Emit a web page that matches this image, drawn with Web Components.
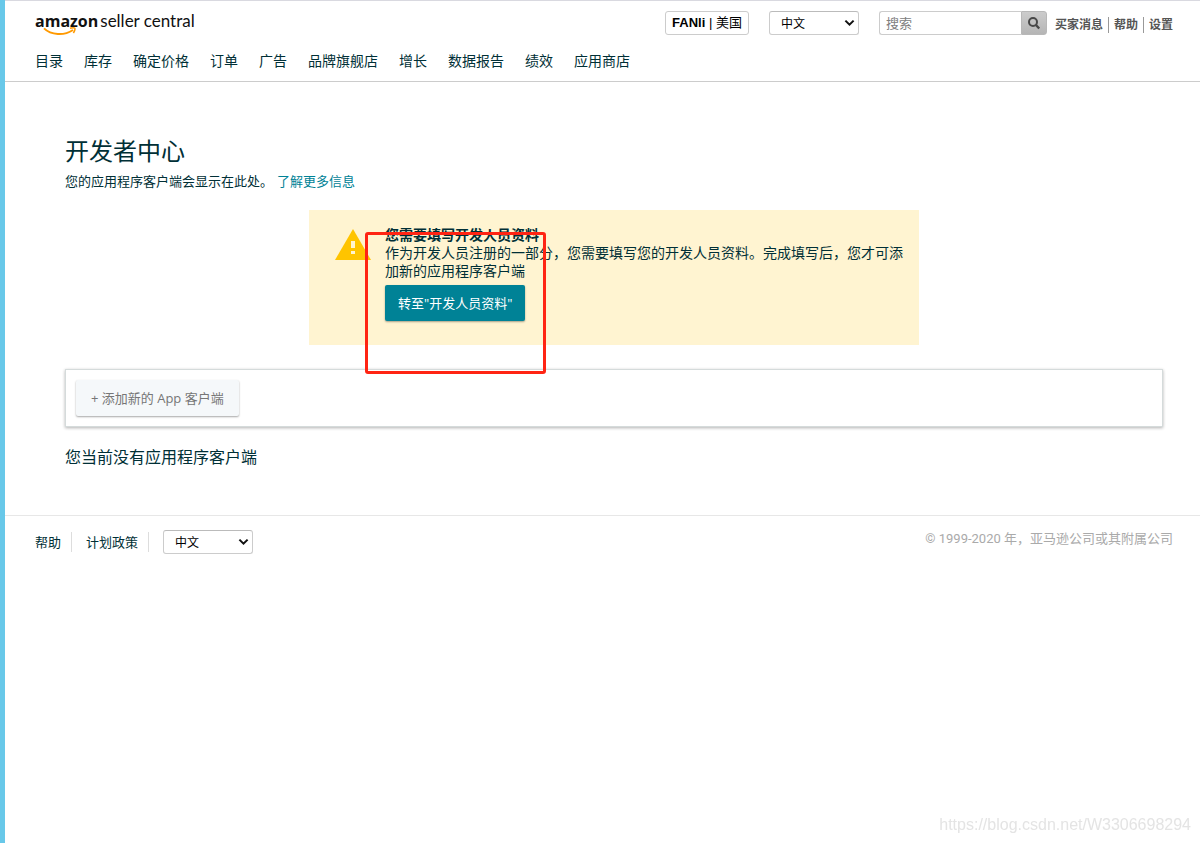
<!DOCTYPE html>
<html lang="zh-CN">
<head>
<meta charset="utf-8">
<meta name="viewport" content="width=device-width, initial-scale=1">
<title>开发者中心</title>
<style>
  html {
    --ink: #002f36;
    --teal: #008296;
    --line: #ccc;
  }

  body {
    margin: 0;
    min-height: 100vh;
    box-sizing: border-box;
    border-left: 5px solid #68c8e9;
    background: #fff;
    color: var(--ink);
    font-family: "Open Sans", "Noto Sans CJK SC", sans-serif;
    font-size: 13px;
    line-height: 20px;
  }
</style>
</head>
<body>

<seller-header></seller-header>

<developer-console>
  <profile-alert heading="您需要填写开发人员资料" action="转至&quot;开发人员资料&quot;">作为开发人员注册的一部分，您需要填写您的开发人员资料。完成填写后，您才可添加新的应用程序客户端</profile-alert>
</developer-console>

<seller-footer></seller-footer>

<page-watermark>https://blog.csdn.net/W3306698294</page-watermark>

<script>
// shared base: clones the template getter into an open shadow root
class ShadowElement extends HTMLElement {
  constructor() {
    super();
    let t = document.createElement("template");
    t.innerHTML = this.template;
    this.attachShadow({ mode: "open" });
    this.shadowRoot.appendChild(t.content.cloneNode(true));
  }
}

class LanguageSelect extends ShadowElement {
  get template() {
    return `
    <style>
      :host {
        display: inline-grid;
        width: 90px;
        align-items: center;
      }

      select, svg {
        grid-area: 1 / 1;
      }

      select {
        appearance: none;
        box-sizing: border-box;
        width: 100%;
        height: 24px;
        margin: 0;
        padding: 2px 20px 0 11px;
        border: 1px solid var(--line);
        border-top-color: #bbb;
        border-radius: 3px;
        background: #fff;
        color: #000;
        font: inherit;
        font-size: 12px;
      }

      svg {
        justify-self: end;
        margin-right: 4px;
        pointer-events: none;
      }
    </style>
    <select aria-label="语言">
      <option>中文</option>
      <option>English</option>
    </select>
    <svg width="11" height="8" viewBox="0 0 11 8" fill="none" stroke="#111" stroke-width="2" aria-hidden="true">
      <path d="M1.4 1.6 5.5 5.7 9.6 1.6"/>
    </svg>
    `;
  }
}

customElements.define("language-select", LanguageSelect);

class SellerLogo extends ShadowElement {
  get template() {
    return `
    <style>
      :host {
        display: block;
      }

      a {
        position: relative;
        display: flex;
        align-items: baseline;
        gap: 2px;
        color: #111;
        font-family: "Open Sans", sans-serif;
        font-size: 16px;
        line-height: 20px;
        text-decoration: none;
      }

      .light {
        font-family: Lato, sans-serif;
        font-size: 17px;
      }

      /* the smile sits over the descent of the word */
      svg {
        position: absolute;
        left: 8px;
        top: 16px;
      }
    </style>
    <a href="#"><b>amazon</b><span class="light">seller central</span>
      <svg width="34" height="10" viewBox="0 0 34 10" fill="none" stroke="#f90" aria-hidden="true">
        <path d="M1 1.4C8 8.2 21 9 30 3" stroke-width="2"/>
        <path d="M27 1.2c2.3-.5 4.3-.6 4.8 0s-.2 2.8-1.4 4.8" stroke-width="1.5"/>
      </svg>
    </a>
    `;
  }
}

customElements.define("seller-logo", SellerLogo);

class SearchBox extends ShadowElement {
  get template() {
    return `
    <style>
      :host {
        display: block;
      }

      form {
        display: flex;
        width: 168px;
        height: 24px;
      }

      input {
        flex: 1;
        min-width: 0;
        box-sizing: border-box;
        padding: 0 6px;
        border: 1px solid var(--line);
        border-right: 0;
        border-radius: 3px 0 0 3px;
        font: inherit;
      }

      input::placeholder {
        color: #808080;
      }

      button {
        display: grid;
        place-items: center;
        width: 26px;
        padding: 0;
        border: 1px solid #b8b8b8;
        border-radius: 0 3px 3px 0;
        background: linear-gradient(#ccc, #b5b5b5);
      }
    </style>
    <form>
      <input type="search" placeholder="搜索" aria-label="搜索">
      <button type="button" aria-label="提交搜索">
        <svg width="14" height="14" viewBox="0 0 14 14" fill="none" stroke="#484848" stroke-width="2">
          <circle cx="6" cy="6" r="4"/>
          <path d="m9 9 3.2 3.5" stroke-width="2.4"/>
        </svg>
      </button>
    </form>
    `;
  }
}

customElements.define("search-box", SearchBox);

class SellerHeader extends ShadowElement {
  get template() {
    return `
    <style>
      :host {
        display: block;
        padding: 10px 27px 10px 30px;
        border-top: 1px solid #d9d9e0;
        border-bottom: 1px solid var(--line);
      }

      .top, .tools, .links, nav {
        display: flex;
      }

      .top {
        justify-content: space-between;
      }

      .tools {
        gap: 20px;
      }

      .account {
        box-sizing: border-box;
        height: 24px;
        padding: 0 6px;
        border: 1px solid var(--line);
        border-radius: 3px;
        background: #fff;
        color: #000;
        font-family: "Liberation Sans", "Noto Sans CJK SC", sans-serif;
        font-size: 13px;
        line-height: 22px;
        white-space: nowrap;
      }

      .find {
        display: flex;
        gap: 8px;
      }

      .links {
        align-items: center;
        padding-top: 3px;
        font-size: 12px;
        font-weight: bold;
        line-height: 16px;
      }

      .links a {
        color: #555;
        text-decoration: none;
      }

      .links a + a {
        margin-left: 5px;
        padding-left: 5px;
        border-left: 1px solid #999;
      }

      nav {
        flex-wrap: wrap;
        gap: 21px;
        margin-top: 16px;
        font-size: 14px;
      }

      nav a {
        color: var(--ink);
        text-decoration: none;
      }
    </style>
    <div class="top">
      <seller-logo></seller-logo>
      <div class="tools">
        <button class="account" type="button"><b>FANli</b> | 美国</button>
        <language-select></language-select>
        <div class="find">
          <search-box></search-box>
          <div class="links">
            <a href="#">买家消息</a><a href="#">帮助</a><a href="#">设置</a>
          </div>
        </div>
      </div>
    </div>
    <nav>
      <a href="#">目录</a>
      <a href="#">库存</a>
      <a href="#">确定价格</a>
      <a href="#">订单</a>
      <a href="#">广告</a>
      <a href="#">品牌旗舰店</a>
      <a href="#">增长</a>
      <a href="#">数据报告</a>
      <a href="#">绩效</a>
      <a href="#">应用商店</a>
    </nav>
    `;
  }
}

customElements.define("seller-header", SellerHeader);

class ProfileAlert extends ShadowElement {
  get template() {
    return `
    <style>
      :host {
        position: relative;
        display: flex;
        gap: 14px;
        box-sizing: border-box;
        max-width: 610px;
        margin: 0 auto;
        padding: 16px 14px 24px 26px;
        background: #fff4d1;
        font-size: 14px;
        line-height: 18px;
      }

      .icon {
        flex: none;
        margin-top: 2px;
      }

      h2, p {
        margin: 0;
        font-size: inherit;
      }

      button {
        height: 36px;
        margin-top: 5px;
        padding: 0 13px;
        border: 0;
        border-radius: 2px;
        background: var(--teal);
        box-shadow: 0 1px 2px rgba(0, 0, 0, 0.35);
        color: #fff;
        font: inherit;
        font-size: 13px;
      }

      /* red frame drawn over the notice and past its lower edge */
      .mark {
        position: absolute;
        left: 56px;
        top: 22px;
        width: 175px;
        height: 136px;
        border: 3px solid #ff2413;
        border-radius: 3px;
        pointer-events: none;
      }
    </style>
    <svg class="icon" width="36" height="32" viewBox="0 0 36 32" aria-hidden="true">
      <path d="M18 1 36 32H0z" fill="#ffc400"/>
      <path d="M16 13h4v7h-4zM16 23h4v3h-4z" fill="#fff4d1"/>
    </svg>
    <div>
      <h2></h2>
      <p><slot></slot></p>
      <button type="button"></button>
    </div>
    <div class="mark"></div>
    `;
  }

  connectedCallback() {
    this.shadowRoot.querySelector("h2").textContent = this.getAttribute("heading");
    this.shadowRoot.querySelector("button").textContent = this.getAttribute("action");
  }
}

customElements.define("profile-alert", ProfileAlert);

class DeveloperConsole extends ShadowElement {
  get template() {
    return `
    <style>
      :host {
        display: block;
        padding: 51px 37px 46px 60px;
      }

      h1 {
        margin: 0;
        font-size: 24px;
        font-weight: normal;
        line-height: 36px;
      }

      .intro {
        margin: 2px 0 19px;
      }

      .intro a {
        margin-left: 4px;
        color: var(--teal);
        text-decoration: none;
      }

      .card {
        margin: 24px 0 18px;
        padding: 10px;
        border: 1px solid #d5dbdb;
        box-shadow: 0 1px 3px rgba(0, 0, 0, 0.3);
      }

      .card button {
        display: block;
        height: 36px;
        padding: 0 15px;
        border: 0;
        border-radius: 2px;
        background: #f5f8fa;
        box-shadow: 0 1px 2px rgba(0, 0, 0, 0.35);
        color: #767676;
        font: inherit;
      }

      .empty {
        margin: 0;
        font-size: 16px;
        line-height: 24px;
      }
    </style>
    <h1>开发者中心</h1>
    <p class="intro">您的应用程序客户端会显示在此处。<a href="#">了解更多信息</a></p>
    <slot></slot>
    <div class="card">
      <button type="button" disabled>+ 添加新的 App 客户端</button>
    </div>
    <p class="empty">您当前没有应用程序客户端</p>
    `;
  }
}

customElements.define("developer-console", DeveloperConsole);

class SellerFooter extends ShadowElement {
  get template() {
    return `
    <style>
      :host {
        display: flex;
        justify-content: space-between;
        padding: 14px 27px 14px 30px;
        border-top: 1px solid #e7e7e7;
      }

      .links {
        display: flex;
        align-items: center;
        gap: 14px;
      }

      a {
        padding-right: 10px;
        border-right: 1px solid #ddd;
        color: var(--ink);
        text-decoration: none;
      }

      small {
        color: #aaa;
        font-family: Roboto, "Noto Sans CJK SC", sans-serif;
        font-size: 13px;
        line-height: 18px;
      }
    </style>
    <div class="links">
      <a href="#">帮助</a>
      <a href="#">计划政策</a>
      <language-select></language-select>
    </div>
    <small>© 1999-2020 年，亚马逊公司或其附属公司</small>
    `;
  }
}

customElements.define("seller-footer", SellerFooter);

class PageWatermark extends ShadowElement {
  get template() {
    return `
    <style>
      :host {
        position: fixed;
        right: 9px;
        bottom: 8px;
        color: #e4e4e4;
        font-family: "Liberation Sans", sans-serif;
        font-size: 16px;
        pointer-events: none;
      }
    </style>
    <slot></slot>
    `;
  }
}

customElements.define("page-watermark", PageWatermark);
</script>
</body>
</html>
